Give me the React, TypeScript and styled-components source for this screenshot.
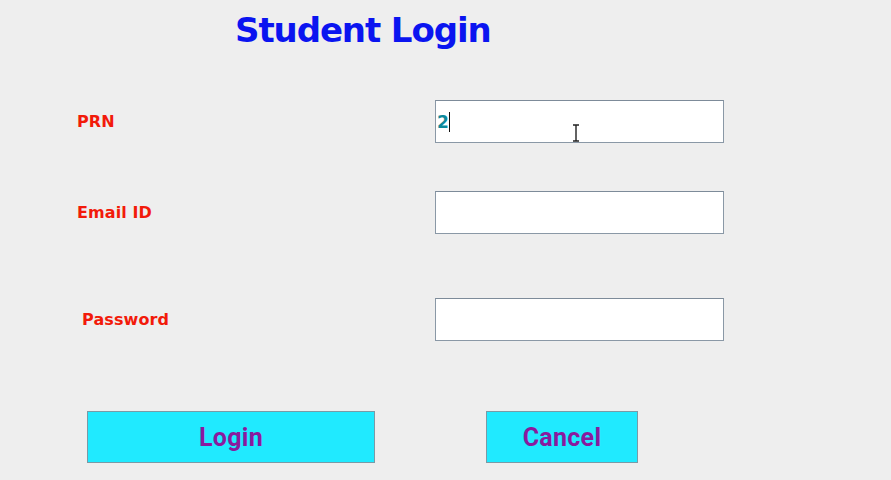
import styled, { createGlobalStyle } from "styled-components";

const Global = createGlobalStyle`
  html, body {
    margin: 0;
    padding: 0;
    background: #eeeeee;
  }
  #root {
    width: 891px;
    height: 480px;
  }
`;

const Page = styled.div`
  width: 891px;
  height: 480px;
  box-sizing: border-box;
  background: #eeeeee;
  overflow: hidden;
  display: flex;
  flex-direction: column;
`;

const Title = styled.h1`
  margin: 0;
  padding: 8px 0 0 235px;
  height: 52px;
  box-sizing: border-box;
  color: #0a14f0;
  font-family: "DejaVu Sans", Verdana, sans-serif;
  font-size: 34px;
  font-weight: 700;
  line-height: 44px;
  letter-spacing: -1.1px;
`;

const Form = styled.div`
  display: flex;
  flex-direction: column;
`;

const Row = styled.div<{ $top: number }>`
  display: flex;
  align-items: center;
  margin-top: ${(p) => p.$top}px;
  height: 43px;
`;

const Label = styled.label<{ $indent?: number }>`
  box-sizing: border-box;
  width: 435px;
  padding-left: ${(p) => 77 + (p.$indent ?? 0)}px;
  color: #f21a0a;
  font-family: "DejaVu Sans", Verdana, sans-serif;
  font-size: 16px;
  font-weight: 700;
  letter-spacing: 0.1px;
`;

const Field = styled.div`
  position: relative;
  width: 289px;
  height: 43px;
  box-sizing: border-box;
  background: #ffffff;
  border: 1px solid #8a98a6;
  border-top-color: #7d8b99;
  display: flex;
  align-items: center;
  padding-left: 1px;
`;

const Value = styled.span`
  color: #0e8a9c;
  font-family: "DejaVu Sans", Verdana, sans-serif;
  font-size: 17px;
  font-weight: 700;
  letter-spacing: -0.5px;
`;

const Caret = styled.span`
  display: inline-block;
  width: 1px;
  height: 20px;
  background: #111111;
  margin-left: 1px;
`;

const Cursor = styled.svg`
  position: absolute;
  left: 136px;
  top: 23px;
`;

const Buttons = styled.div`
  display: flex;
  margin-top: 70px;
  padding-left: 87px;
  gap: 111px;
`;

const Button = styled.button<{ $width: number }>`
  width: ${(p) => p.$width}px;
  height: 52px;
  box-sizing: border-box;
  background: #20eaff;
  border: 1px solid #7a9aa6;
  color: #8a1a9e;
  font-family: Roboto, "Liberation Sans", sans-serif;
  font-size: 25px;
  font-weight: 700;
  letter-spacing: 0.3px;
  padding: 0;
  cursor: pointer;
`;

export default function App() {
  return (
    <Page>
      <Global />
      <Title>Student Login</Title>
      <Form>
        <Row $top={48}>
          <Label>PRN</Label>
          <Field>
            <Value>2</Value>
            <Caret />
            <Cursor width="8" height="18" viewBox="0 0 8 18">
              <path
                d="M1 1h6M4 1v16M1 17h6"
                stroke="#222"
                strokeWidth="1.4"
                fill="none"
              />
            </Cursor>
          </Field>
        </Row>
        <Row $top={48}>
          <Label>Email ID</Label>
          <Field />
        </Row>
        <Row $top={64}>
          <Label $indent={5}>Password</Label>
          <Field />
        </Row>
      </Form>
      <Buttons>
        <Button $width={288}>Login</Button>
        <Button $width={152}>Cancel</Button>
      </Buttons>
    </Page>
  );
}
